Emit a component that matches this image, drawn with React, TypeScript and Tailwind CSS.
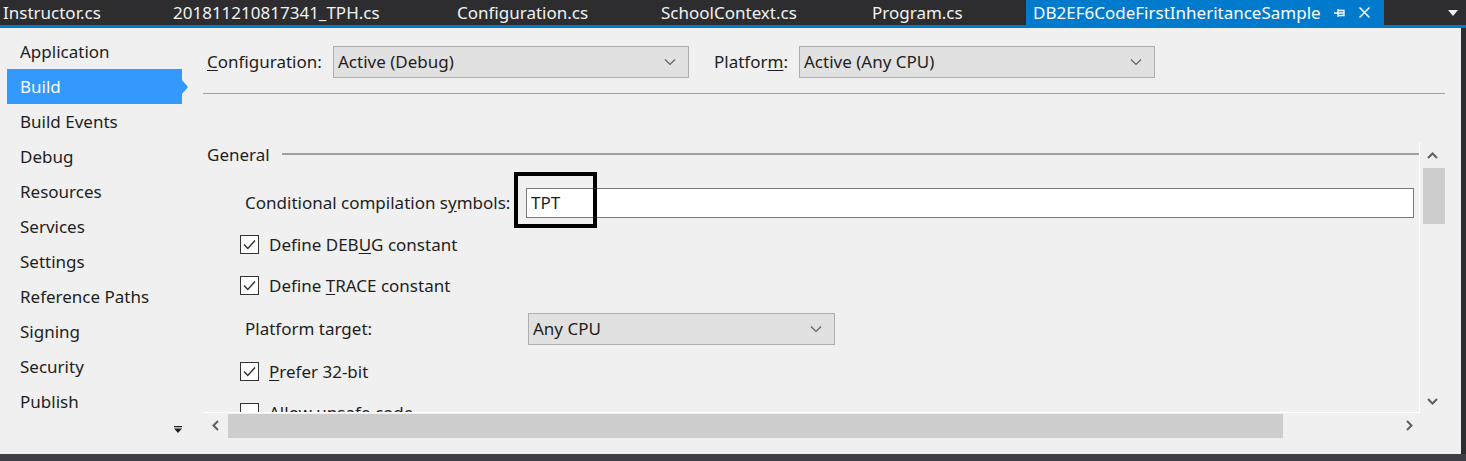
import React from "react";

const font = { fontFamily: '"Noto Sans", "Open Sans", sans-serif' };

const tabs = ["Instructor.cs", "201811210817341_TPH.cs", "Configuration.cs", "SchoolContext.cs", "Program.cs"];
const tabWidths = ["w-[170px]", "w-[284px]", "w-[204px]", "w-[211px]", "w-[157px]"];

const navItems = [
  "Application",
  "Build",
  "Build Events",
  "Debug",
  "Resources",
  "Services",
  "Settings",
  "Reference Paths",
  "Signing",
  "Security",
  "Publish",
];

const Chevron = () => (
  <svg width="12" height="8" viewBox="0 0 12 8" className="shrink-0">
    <path d="M1 1.5 L6 6.5 L11 1.5" fill="none" stroke="#606060" strokeWidth="1.2" />
  </svg>
);

const Combo = ({ value, className }: { value: string; className: string }) => (
  <div
    className={`flex items-center justify-between h-[32px] bg-[#e1e1e1] border border-[#adadad] pl-[4px] pr-[12px] text-[#1e1e1e] ${className}`}
  >
    <span>{value}</span>
    <Chevron />
  </div>
);

const Check = ({ checked }: { checked: boolean }) => (
  <div className="w-[19px] h-[19px] border border-[#333333] bg-white flex items-center justify-center shrink-0">
    {checked && (
      <svg width="15" height="15" viewBox="0 0 15 15">
        <path d="M2 7.5 L5.8 11.5 L13 3.5" fill="none" stroke="#333333" strokeWidth="1.5" />
      </svg>
    )}
  </div>
);

const CheckRow = ({ children, checked = true }: { children: React.ReactNode; checked?: boolean }) => (
  <div className="flex items-center gap-[10px] h-[41px] pl-[37px] shrink-0">
    <Check checked={checked} />
    <span>{children}</span>
  </div>
);

export default function App() {
  return (
    <div className="w-[1466px] h-[461px] bg-[#2d2d30] flex flex-col overflow-hidden text-[17px]" style={font}>
      {/* document tabs */}
      <div className="flex h-[25px] items-center text-[#f1f1f1] shrink-0">
        {tabs.map((t, i) => (
          <div key={t} className={`${tabWidths[i]} h-full flex items-center pl-[3px] leading-none`}>
            {t}
          </div>
        ))}
        <div className="h-full w-[358px] bg-[#007acc] text-white flex items-center pl-[7px] gap-[12px] leading-none">
          <span>DB2EF6CodeFirstInheritanceSample</span>
          <svg width="13" height="10" viewBox="0 0 13 10">
            <path d="M1 5 H5 M5 1 V9 M5 2.5 H11 V7.5 H5 M5 5 H11" fill="none" stroke="white" strokeWidth="1.3" />
          </svg>
          <svg width="13" height="13" viewBox="0 0 13 13">
            <path d="M1.5 1.5 L11.5 11.5 M11.5 1.5 L1.5 11.5" stroke="white" strokeWidth="1.5" />
          </svg>
        </div>
        <div className="flex-1 flex justify-end pr-[8px]">
          <svg width="10" height="6" viewBox="0 0 10 6">
            <path d="M0 0 H10 L5 6 Z" fill="#f1f1f1" />
          </svg>
        </div>
      </div>
      <div className="h-[3px] bg-[#007acc] shrink-0" />

      <div className="flex flex-1 min-h-0">
        <div className="w-[1461px] bg-[#f0f0f0] flex text-[#1e1e1e]">
          {/* left nav */}
          <div className="w-[203px] flex flex-col pt-[6px] relative">
            {navItems.map((n) => (
              <div key={n} className="h-[35px] flex items-center">
                {n === "Build" ? (
                  <div className="ml-[7px] w-[175px] h-full bg-[#3399ff] text-white flex items-center pl-[13px] relative">
                    Build
                    <div className="absolute right-[-6px] top-1/2 -translate-y-1/2 w-0 h-0 border-y-[7px] border-y-transparent border-l-[6px] border-l-[#3399ff]" />
                  </div>
                ) : (
                  <span className="pl-[20px]">{n}</span>
                )}
              </div>
            ))}
            <div className="flex justify-end pr-[21px] pt-[7px]">
              <svg width="8" height="7" viewBox="0 0 8 7">
                <path d="M0 0 H8 V1.2 H0 Z M0 2.5 H8 L4 7 Z" fill="#1e1e1e" />
              </svg>
            </div>
          </div>

          {/* main */}
          <div className="flex-1 flex flex-col pr-[16px]">
            <div className="flex items-center h-[32px] mt-[18px] pl-[4px]">
              <span className="w-[126px]">
                <span className="underline underline-offset-2">C</span>onfiguration:
              </span>
              <Combo value="Active (Debug)" className="w-[356px]" />
              <span className="ml-[25px] w-[85px]">
                Platfor<span className="underline underline-offset-2">m</span>:
              </span>
              <Combo value="Active (Any CPU)" className="w-[356px]" />
            </div>
            <div className="h-px bg-[#a0a0a0] mt-[15px]" />

            {/* scroll panel */}
            <div className="mt-[48px] flex flex-col h-[296px]">
              <div className="flex flex-1 min-h-0">
                <div className="flex-1 overflow-hidden border-r border-b border-white flex flex-col">
                  <div className="flex items-center h-[26px] pl-[4px] shrink-0">
                    <span>General</span>
                    <div className="flex-1 h-[2px] bg-[#a0a0a0] ml-[12px] -mt-[3px]" />
                  </div>
                  <div className="flex items-center h-[68px] shrink-0 pl-[42px] pr-[5px] mt-[1px]">
                    <span className="w-[281px]">
                      Conditional compilation s<span className="underline underline-offset-2">y</span>mbols:
                    </span>
                    <div className="flex-1 h-[30px] bg-white border border-[#7a7a7a] flex items-center pl-[4px] relative">
                      TPT
                      <div className="absolute left-[-13px] top-[-17px] w-[83px] h-[56px] border-[4px] border-black" />
                    </div>
                  </div>
                  <div className="-mt-[13px] shrink-0 flex flex-col">
                    <CheckRow>
                      Define DEB<span className="underline underline-offset-2">U</span>G constant
                    </CheckRow>
                    <CheckRow>
                      Define <span className="underline underline-offset-2">T</span>RACE constant
                    </CheckRow>
                  </div>
                  <div className="flex items-center h-[44px] pl-[42px] shrink-0 mt-[1px]">
                    <span className="w-[283px]">Platform target:</span>
                    <Combo value="Any CPU" className="w-[307px]" />
                  </div>
                  <div className="shrink-0 flex flex-col">
                    <CheckRow>
                      <span className="underline underline-offset-2">P</span>refer 32-bit
                    </CheckRow>
                    <CheckRow checked={false}>Allow unsafe code</CheckRow>
                  </div>
                </div>
                {/* vertical scrollbar */}
                <div className="w-[25px] flex flex-col items-center">
                  <div className="h-[26px] flex items-center justify-center">
                    <svg width="11" height="7" viewBox="0 0 11 7">
                      <path d="M1 6 L5.5 1.5 L10 6" fill="none" stroke="#606060" strokeWidth="2" />
                    </svg>
                  </div>
                  <div className="w-[22px] ml-[2px] h-[56px] bg-[#cdcdcd]" />
                  <div className="flex-1" />
                  <div className="h-[24px] flex items-center justify-center">
                    <svg width="11" height="7" viewBox="0 0 11 7">
                      <path d="M1 1 L5.5 5.5 L10 1" fill="none" stroke="#606060" strokeWidth="2" />
                    </svg>
                  </div>
                </div>
              </div>
              {/* horizontal scrollbar */}
              <div className="h-[25px] flex items-center shrink-0">
                <div className="w-[25px] flex justify-center">
                  <svg width="7" height="11" viewBox="0 0 7 11">
                    <path d="M6 1 L1.5 5.5 L6 10" fill="none" stroke="#606060" strokeWidth="2" />
                  </svg>
                </div>
                <div className="w-[1055px] h-[24px] bg-[#cdcdcd]" />
                <div className="flex-1 flex justify-end pr-[32px]">
                  <svg width="7" height="11" viewBox="0 0 7 11">
                    <path d="M1 1 L5.5 5.5 L1 10" fill="none" stroke="#606060" strokeWidth="2" />
                  </svg>
                </div>
              </div>
            </div>
          </div>
        </div>
        <div className="flex-1 bg-[#2d2d30]" />
      </div>
      <div className="h-[7px] bg-[#3f3f46] shrink-0" />
    </div>
  );
}
